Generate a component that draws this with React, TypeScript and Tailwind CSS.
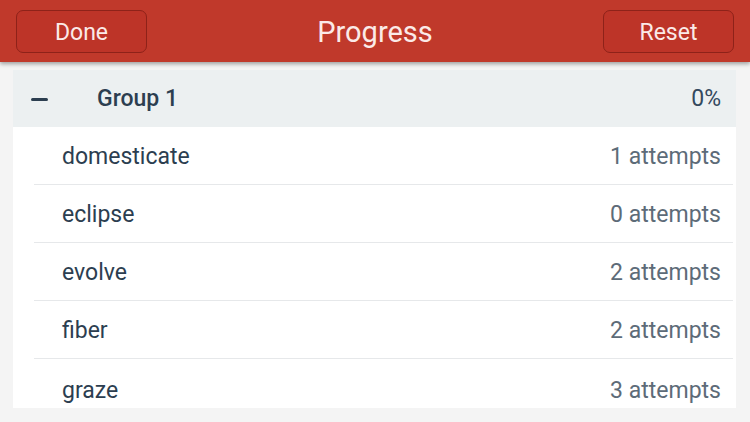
import React from "react";

const items = [
  { word: "domesticate", attempts: 1 },
  { word: "eclipse", attempts: 0 },
  { word: "evolve", attempts: 2 },
  { word: "fiber", attempts: 2 },
  { word: "graze", attempts: 3 },
];

const App = () => {
  return (
    <div
      className="w-[750px] h-[422px] overflow-hidden bg-[#f4f4f4] flex flex-col"
      style={{ fontFamily: "Roboto, 'Liberation Sans', sans-serif" }}
    >
      <div className="h-[62px] shrink-0 bg-[#c0392b] flex items-center justify-between px-[16px] shadow-[0_2px_4px_rgba(0,0,0,0.35)] relative z-10">
        <button className="w-[131px] h-[43px] mt-[1px] pt-[3px] rounded-[7px] border border-[#8e2219] bg-[#bd3428] text-[#fbeae8] text-[23px] flex items-center justify-center">
          Done
        </button>
        <span className="text-[#fbeae8] text-[29px] mt-[3px]">Progress</span>
        <button className="w-[131px] h-[43px] mt-[1px] pt-[3px] rounded-[7px] border border-[#8e2219] bg-[#bd3428] text-[#fbeae8] text-[23px] flex items-center justify-center">
          Reset
        </button>
      </div>
      <div className="mx-[13px] w-[723px] mt-[8px] bg-white">
        <div className="h-[57px] pt-[2px] bg-[#ecf0f1] flex items-center pl-[18px] pr-[15px]">
          <span className="w-[17px] h-[3px] bg-[#2c3e50] rounded-sm" />
          <span className="ml-[49px] text-[23px] font-medium text-[#2c3e50]">
            Group 1
          </span>
          <span className="ml-auto text-[23px] text-[#34495e]">0%</span>
        </div>
        {items.map((it, i) => (
          <div
            key={it.word}
            className={`ml-[21px] mr-[3px] flex pl-[28px] pr-[12px] ${
              i < items.length - 1
                ? "h-[58px] pt-[3px] items-center border-b border-[#e6e8ea]"
                : "h-[49px] items-start pt-[15px]"
            }`}
          >
            <span className="text-[23px] text-[#2c3e50]">{it.word}</span>
            <span className="ml-auto text-[23px] text-[#5d6b78]">
              {it.attempts} attempts
            </span>
          </div>
        ))}
      </div>
    </div>
  );
};

export default App;
